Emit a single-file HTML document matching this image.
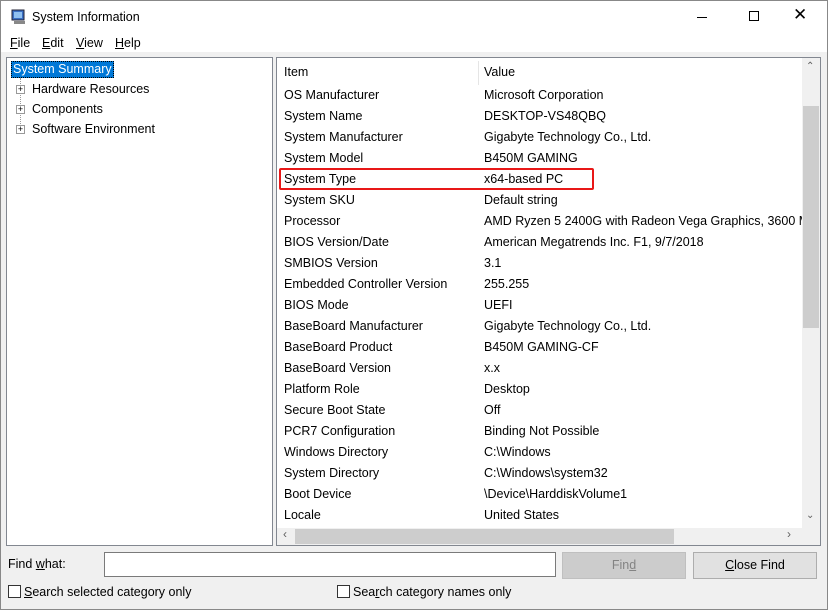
<!DOCTYPE html>
<html><head><style>
*{margin:0;padding:0;box-sizing:border-box}
body{width:828px;height:610px;background:#f0f0f0;font-family:"Liberation Sans",sans-serif;font-size:12.5px;color:#000;position:relative;overflow:hidden}
.abs{position:absolute}
.win{position:absolute;left:0;top:0;width:828px;height:610px;border:1px solid #888;}
u{text-decoration:underline}
.row{position:absolute;left:7px;white-space:nowrap}
.val{position:absolute;left:207px;white-space:nowrap}
.cb{position:absolute;width:13px;height:13px;border:1px solid #333;background:#fff}
</style></head><body>
<div class="abs" style="left:0;top:0;width:828px;height:52px;background:#fff"></div>
<svg class="abs" style="left:11px;top:9px" width="16" height="16"><rect x="1" y="1" width="12" height="10" fill="#3a6fc4" stroke="#223" stroke-width="1"/><rect x="3" y="3" width="8" height="6" fill="#8fc0f0"/><rect x="3" y="12" width="11" height="3" fill="#888"/></svg>
<div class="abs" style="left:32px;top:10px;font-size:12.5px">System Information</div>
<div class="abs" style="left:697px;top:17px;width:10px;height:1px;background:#000"></div>
<div class="abs" style="left:749px;top:11px;width:10px;height:10px;border:1px solid #000"></div>
<div class="abs" style="left:793px;top:5px;font-size:17px;font-weight:300">✕</div>
<div class="abs" style="left:10px;top:36px"><u>F</u>ile</div>
<div class="abs" style="left:42px;top:36px"><u>E</u>dit</div>
<div class="abs" style="left:76px;top:36px"><u>V</u>iew</div>
<div class="abs" style="left:115px;top:36px"><u>H</u>elp</div>

<div class="abs" style="left:6px;top:57px;width:267px;height:489px;background:#fff;border:1px solid #828790"></div>
<div class="abs" style="left:11px;top:61px;width:103px;height:17px;background:#0078d7;border:1px dotted #000;color:#fff;padding-left:1px;line-height:15px">System Summary</div>
<div class="abs" style="left:20px;top:78px;height:52px;border-left:1px dotted #999"></div>
<div class="abs" style="left:16px;top:85px;width:9px;height:9px;border:1px solid #999;background:#fff;font-size:9px;line-height:7px;text-align:center">+</div>
<div class="abs" style="left:16px;top:105px;width:9px;height:9px;border:1px solid #999;background:#fff;font-size:9px;line-height:7px;text-align:center">+</div>
<div class="abs" style="left:16px;top:125px;width:9px;height:9px;border:1px solid #999;background:#fff;font-size:9px;line-height:7px;text-align:center">+</div>
<div class="abs" style="left:32px;top:82px">Hardware Resources</div>
<div class="abs" style="left:32px;top:102px">Components</div>
<div class="abs" style="left:32px;top:122px">Software Environment</div>

<div class="abs" style="left:276px;top:57px;width:545px;height:489px;background:#fff;border:1px solid #828790;overflow:hidden">
 <div class="abs" style="left:201px;top:3px;width:1px;height:24px;background:#e5e5e5"></div>
 <div class="row" style="top:7px">Item</div><div class="val" style="top:7px">Value</div>
 <div class="abs" style="left:2px;top:110px;width:315px;height:22px;border:2px solid #e81818;border-radius:2px"></div>
 <div style="position:absolute;left:0;top:27px;width:525px;line-height:21px">
 <div style="position:relative;height:21px"><span class="row">OS Manufacturer</span><span class="val">Microsoft Corporation</span></div>
 <div style="position:relative;height:21px"><span class="row">System Name</span><span class="val">DESKTOP-VS48QBQ</span></div>
 <div style="position:relative;height:21px"><span class="row">System Manufacturer</span><span class="val">Gigabyte Technology Co., Ltd.</span></div>
 <div style="position:relative;height:21px"><span class="row">System Model</span><span class="val">B450M GAMING</span></div>
 <div style="position:relative;height:21px"><span class="row">System Type</span><span class="val">x64-based PC</span></div>
 <div style="position:relative;height:21px"><span class="row">System SKU</span><span class="val">Default string</span></div>
 <div style="position:relative;height:21px"><span class="row">Processor</span><span class="val">AMD Ryzen 5 2400G with Radeon Vega Graphics, 3600 Mhz</span></div>
 <div style="position:relative;height:21px"><span class="row">BIOS Version/Date</span><span class="val">American Megatrends Inc. F1, 9/7/2018</span></div>
 <div style="position:relative;height:21px"><span class="row">SMBIOS Version</span><span class="val">3.1</span></div>
 <div style="position:relative;height:21px"><span class="row">Embedded Controller Version</span><span class="val">255.255</span></div>
 <div style="position:relative;height:21px"><span class="row">BIOS Mode</span><span class="val">UEFI</span></div>
 <div style="position:relative;height:21px"><span class="row">BaseBoard Manufacturer</span><span class="val">Gigabyte Technology Co., Ltd.</span></div>
 <div style="position:relative;height:21px"><span class="row">BaseBoard Product</span><span class="val">B450M GAMING-CF</span></div>
 <div style="position:relative;height:21px"><span class="row">BaseBoard Version</span><span class="val">x.x</span></div>
 <div style="position:relative;height:21px"><span class="row">Platform Role</span><span class="val">Desktop</span></div>
 <div style="position:relative;height:21px"><span class="row">Secure Boot State</span><span class="val">Off</span></div>
 <div style="position:relative;height:21px"><span class="row">PCR7 Configuration</span><span class="val">Binding Not Possible</span></div>
 <div style="position:relative;height:21px"><span class="row">Windows Directory</span><span class="val">C:\Windows</span></div>
 <div style="position:relative;height:21px"><span class="row">System Directory</span><span class="val">C:\Windows\system32</span></div>
 <div style="position:relative;height:21px"><span class="row">Boot Device</span><span class="val">\Device\HarddiskVolume1</span></div>
 <div style="position:relative;height:21px"><span class="row">Locale</span><span class="val">United States</span></div>
 </div>
 <div class="abs" style="left:525px;top:0;width:18px;height:470px;background:#f0f0f0"></div>
 <div class="abs" style="left:526px;top:48px;width:16px;height:222px;background:#cdcdcd"></div>
 <div class="abs" style="left:529px;top:3px;font-size:10px;color:#606060">&#8963;</div>
 <div class="abs" style="left:529px;top:452px;font-size:10px;color:#606060">&#8964;</div>
 <div class="abs" style="left:0;top:470px;width:543px;height:17px;background:#f0f0f0"></div>
 <div class="abs" style="left:18px;top:471px;width:379px;height:15px;background:#cdcdcd"></div>
 <div class="abs" style="left:6px;top:469px;font-size:12px;color:#606060">‹</div>
 <div class="abs" style="left:510px;top:469px;font-size:12px;color:#606060">›</div>
 <div class="abs" style="left:525px;top:470px;width:18px;height:17px;background:#f0f0f0"></div>
</div>

<div class="abs" style="left:8px;top:557px">Find <u>w</u>hat:</div>
<div class="abs" style="left:104px;top:552px;width:452px;height:25px;background:#fff;border:1px solid #7a7a7a"></div>
<div class="abs" style="left:562px;top:552px;width:124px;height:27px;background:#cccccc;border:1px solid #bfbfbf;color:#838383;text-align:center;line-height:25px">Fin<u>d</u></div>
<div class="abs" style="left:693px;top:552px;width:124px;height:27px;background:#e1e1e1;border:1px solid #adadad;text-align:center;line-height:25px"><u>C</u>lose Find</div>
<div class="cb" style="left:8px;top:585px"></div>
<div class="abs" style="left:24px;top:585px"><u>S</u>earch selected category only</div>
<div class="cb" style="left:337px;top:585px"></div>
<div class="abs" style="left:353px;top:585px">Sea<u>r</u>ch category names only</div>
<div class="win"></div>
</body></html>
